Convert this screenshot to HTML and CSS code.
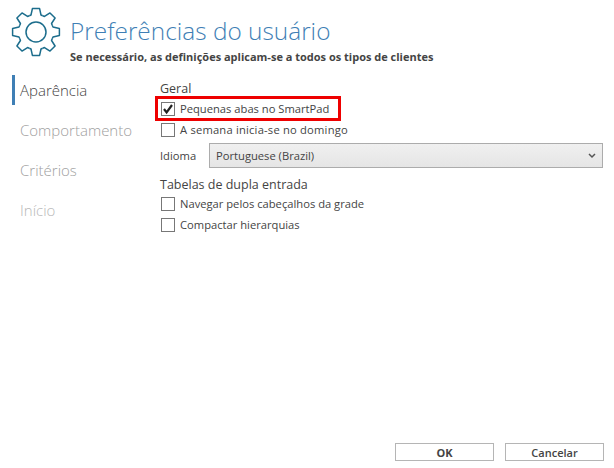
FILE: index.html
```html
<!DOCTYPE html>
<html lang="pt-BR">
<head>
    <meta charset="utf-8">
    <title>Preferências do usuário</title>
    <link rel="stylesheet" href="styles.css">
</head>
<body>
    <div class="dialog">
        <div class="dialog-header">
            <svg class="gear" width="50" height="50" viewBox="-25 -25 50 50">
                <defs>
                    <path id="tooth" d="M-6.7 -16.2L-5 -17L-3.6 -23.4L3.6 -23.4L5 -17L6.7 -16.2"/>
                </defs>
                <g class="gear-lines">
                    <use href="#tooth"/>
                    <use href="#tooth" transform="rotate(45)"/>
                    <use href="#tooth" transform="rotate(90)"/>
                    <use href="#tooth" transform="rotate(135)"/>
                    <use href="#tooth" transform="rotate(180)"/>
                    <use href="#tooth" transform="rotate(225)"/>
                    <use href="#tooth" transform="rotate(270)"/>
                    <use href="#tooth" transform="rotate(315)"/>
                    <circle r="10"/>
                </g>
            </svg>
            <div class="titles">
                <h1>Preferências do usuário</h1>
                <p class="subtitle">Se necessário, as definições aplicam-se a todos os tipos de clientes</p>
            </div>
        </div>

        <div class="dialog-body">
            <ul class="side-nav">
                <li class="nav-item active">Aparência</li>
                <li class="nav-item">Comportamento</li>
                <li class="nav-item">Critérios</li>
                <li class="nav-item faded">Início</li>
            </ul>

            <div class="settings">
                <h2>Geral</h2>
                <div class="option highlighted">
                    <span class="check">
                        <svg width="12" height="12" viewBox="0 0 12 12"><path class="tick" d="M2 6L4.6 9.4L10 2"/></svg>
                    </span>
                    <span>Pequenas abas no SmartPad</span>
                </div>
                <div class="option">
                    <span class="check"></span>
                    <span class="wide-text">A semana inicia-se no domingo</span>
                </div>
                <div class="language-row">
                    <span class="language-label">Idioma</span>
                    <div class="select">
                        <span>Portuguese (Brazil)</span>
                        <svg width="8" height="6" viewBox="0 0 8 6"><path class="chevron" d="M1 1L4 4L7 1"/></svg>
                    </div>
                </div>
                <h2 class="section-gap">Tabelas de dupla entrada</h2>
                <div class="option">
                    <span class="check"></span>
                    <span>Navegar pelos cabeçalhos da grade</span>
                </div>
                <div class="option">
                    <span class="check"></span>
                    <span>Compactar hierarquias</span>
                </div>
            </div>
        </div>

        <div class="dialog-footer">
            <button class="btn btn-ok">OK</button>
            <button class="btn">Cancelar</button>
        </div>
    </div>
</body>
</html>
```

FILE: styles.css
```css
* {
    box-sizing: border-box;
}

body {
    margin: 0;
    background: white;
    font-family: "Open Sans", "Noto Sans", sans-serif;
    color: #444;
}

.dialog {
    width: 614px;
    height: 468px;
    display: flex;
    flex-direction: column;
    padding: 7px 10px 7px 12px;
}

.dialog-header {
    display: flex;
    gap: 9px;
}

.gear {
    flex: none;
    margin-left: -1px;
}

.gear-lines {
    fill: none;
    stroke: #1c6d8c;
    stroke-width: 1.5;
    stroke-linejoin: round;
}

.titles {
    padding-top: 8px;
}

h1 {
    margin: 0;
    font-size: 24.4px;
    line-height: 32px;
    font-weight: 300;
    color: #3f7fb5;
}

.subtitle {
    margin: 3px 0 0;
    font-size: 11px;
    line-height: 14px;
    font-weight: 700;
    color: #444;
}

.dialog-body {
    display: flex;
    margin-top: 11px;
}

.side-nav {
    list-style: none;
    margin: 0;
    padding: 0;
    width: 148px;
    flex: none;
}

.nav-item {
    height: 30px;
    line-height: 30px;
    margin-bottom: 10px;
    padding-left: 8px;
    font-size: 15px;
    font-weight: 300;
    color: #a0a0a0;
}

.nav-item.faded {
    color: #b8b8b8;
}

.nav-item.active {
    border-left: 3px solid #3f7fb5;
    padding-left: 5px;
    color: #444;
}

.settings {
    flex: 1;
    font-size: 11.2px;
    color: #444;
}

h2 {
    margin: 5px 0 0;
    font-size: 12.5px;
    line-height: 17px;
    font-weight: 400;
    color: #444;
}

h2.section-gap {
    margin-top: 8px;
}

.option {
    display: flex;
    align-items: center;
    gap: 5px;
    height: 21px;
    padding-left: 1px;
}

.wide-text {
    letter-spacing: 0.2px;
}

.option.highlighted {
    position: relative;
    margin-top: 1px;
}

.option.highlighted::after {
    content: "";
    position: absolute;
    left: -5px;
    top: -2px;
    width: 186px;
    height: 25px;
    box-sizing: border-box;
    border: 3px solid #ee0000;
}

.check {
    width: 14px;
    height: 14px;
    flex: none;
    border: 1px solid #777;
    background: white;
}

.check svg {
    display: block;
}

.tick {
    fill: none;
    stroke: #222;
    stroke-width: 2.2;
}

.language-row {
    display: flex;
    align-items: center;
    margin-top: 3px;
}

.language-label {
    width: 49px;
}

.select {
    width: 394px;
    height: 25px;
    display: flex;
    align-items: center;
    justify-content: space-between;
    padding: 0 6px;
    border: 1px solid #acacac;
    background: linear-gradient(#f0f0f0, #e5e5e5);
}

.chevron {
    fill: none;
    stroke: #555;
    stroke-width: 1.5;
}

.dialog-footer {
    margin-top: auto;
    display: flex;
    justify-content: flex-end;
    gap: 11px;
}

.btn {
    width: 99px;
    height: 18px;
    padding: 0;
    border: 1px solid #b5b5b5;
    background: white;
    font-family: inherit;
    font-size: 11px;
    font-weight: 600;
    color: #444;
}

.btn-ok {
    font-weight: 700;
}
```
